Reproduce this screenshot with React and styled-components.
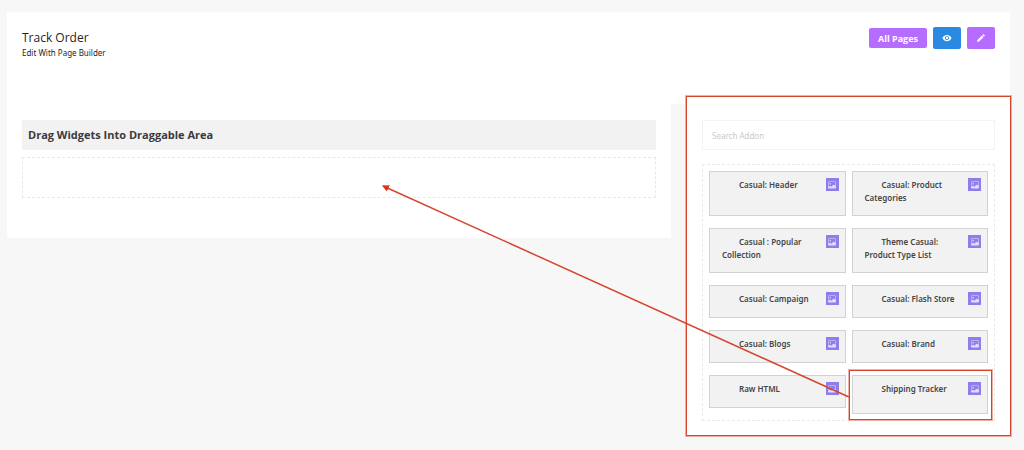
import styled, { createGlobalStyle } from "styled-components";
import { MdEdit, MdVisibility } from "react-icons/md";
import { BsImage } from "react-icons/bs";

const annotationColor = "#d64530";

const headingFont = `"Open Sans", "Noto Sans", sans-serif`;

const GlobalStyle = createGlobalStyle`
  * {
    box-sizing: border-box;
  }
  body {
    margin: 0;
    background: #f7f7f7;
    color: #1f1f23;
    font-family: "Noto Sans", "Open Sans", sans-serif;
  }
`;

const Page = styled.main`
  position: relative;
  padding: 12px 14px 14px 7px;
`;

const Header = styled.header`
  display: flex;
  justify-content: space-between;
  align-items: flex-start;
  min-height: 92px;
  padding: 15px;
  background: #fff;
  h1 {
    margin: 0;
    padding-top: 2px;
    font-family: ${headingFont};
    font-size: 12px;
    line-height: 18px;
    font-weight: 500;
  }
  p {
    margin: 0;
    font-size: 8px;
    line-height: 12px;
    font-weight: 400;
  }
`;

const Actions = styled.div`
  display: flex;
  align-items: center;
  gap: 6px;
`;

const Button = styled.button`
  display: flex;
  align-items: center;
  justify-content: center;
  height: ${({ $icon }) => ($icon ? 22 : 20)}px;
  width: ${({ $icon }) => ($icon ? "28px" : "auto")};
  padding: 0 ${({ $icon }) => ($icon ? 0 : 9)}px;
  border: 0;
  border-radius: 2px;
  background: ${({ $color }) => $color || "#b66dff"};
  color: #fff;
  font-family: ${headingFont};
  font-size: 9px;
  font-weight: 700;
  cursor: pointer;
`;

const Columns = styled.div`
  display: grid;
  grid-template-columns: 664fr 323fr;
  gap: 16px;
  align-items: start;
`;

const Builder = styled.section`
  padding: 16px 15px 40px;
  background: #fff;
  h2 {
    margin: 0 0 7px;
    padding: 0 6px;
    background: #f2f2f2;
    color: #3a3a3c;
    font-family: ${headingFont};
    font-size: 11px;
    line-height: 30px;
    font-weight: 700;
  }
`;

const DropArea = styled.div`
  height: 41px;
  border: 1px dashed #e9e9e9;
`;

const Sidebar = styled.aside`
  position: relative;
  padding: 16px 15px 15px;
  background: #fff;
`;

const Highlight = styled.span`
  position: absolute;
  inset: ${({ $inset }) => $inset};
  border: 1px solid ${annotationColor};
  box-shadow: 0 0 0 1px #eeb0a4;
  pointer-events: none;
`;

const Search = styled.input`
  display: block;
  width: 100%;
  height: 30px;
  margin-bottom: 14px;
  padding: 0 9px;
  border: 1px solid #f3f3f3;
  background: #fff;
  font-family: inherit;
  font-size: 8px;
  &::placeholder {
    color: #c9c9c9;
    opacity: 1;
  }
`;

const AddonList = styled.ul`
  display: grid;
  grid-template-columns: 1fr 1fr;
  align-items: start;
  gap: 12px 6px;
  margin: 0;
  padding: 6px;
  border: 1px dashed #e9e9e9;
  list-style: none;
`;

const Addon = styled.li`
  position: relative;
  display: flex;
  justify-content: space-between;
  align-items: flex-start;
  min-height: ${({ $height }) => $height}px;
  padding: 6px;
  border: 1px solid #d2d2d2;
  background: #f2f2f2;
  cursor: move;
`;

const AddonName = styled.span`
  padding-left: 6px;
  color: #454547;
  font-size: 8px;
  line-height: 13px;
  font-weight: 600;
  text-indent: 17px;
`;

const AddonIcon = styled.span`
  display: flex;
  flex: none;
  align-items: center;
  justify-content: center;
  width: 13px;
  height: 13px;
  background: #8f7eea;
  color: #e2dcff;
`;

const Arrow = styled.svg`
  position: absolute;
  top: 0;
  left: 0;
  width: 100%;
  height: 100%;
  pointer-events: none;
`;

const addons = [
  { name: "Casual: Header", height: 45 },
  { name: "Casual: Product Categories", height: 45 },
  { name: "Casual : Popular Collection", height: 45 },
  { name: "Theme Casual: Product Type List", height: 45 },
  { name: "Casual: Campaign", height: 33 },
  { name: "Casual: Flash Store", height: 33 },
  { name: "Casual: Blogs", height: 33 },
  { name: "Casual: Brand", height: 33 },
  { name: "Raw HTML", height: 33 },
  { name: "Shipping Tracker", height: 39, highlighted: true },
];

export default function App() {
  return (
    <>
      <GlobalStyle />
      <Page>
        <Header>
          <div>
            <h1>Track Order</h1>
            <p>Edit With Page Builder</p>
          </div>
          <Actions>
            <Button type="button">All Pages</Button>
            <Button type="button" $icon $color="#2a8ae2" aria-label="View page">
              <MdVisibility size={10} />
            </Button>
            <Button type="button" $icon aria-label="Edit page">
              <MdEdit size={10} />
            </Button>
          </Actions>
        </Header>
        <Columns>
          <Builder>
            <h2>Drag Widgets Into Draggable Area</h2>
            <DropArea />
          </Builder>
          <Sidebar>
            <Search type="text" placeholder="Search Addon" aria-label="Search Addon" />
            <AddonList>
              {addons.map(({ name, height, highlighted }) => (
                <Addon key={name} $height={height}>
                  <AddonName>{name}</AddonName>
                  <AddonIcon>
                    <BsImage size={8} />
                  </AddonIcon>
                  {highlighted ? <Highlight $inset="-6px -5px -7px -4px" /> : null}
                </Addon>
              ))}
            </AddonList>
            <Highlight $inset="-8px -1px 0 -1px" />
          </Sidebar>
        </Columns>
        <Arrow aria-hidden="true">
          <defs>
            <marker
              id="arrow-head"
              markerUnits="userSpaceOnUse"
              markerWidth="7"
              markerHeight="7"
              refX="6"
              refY="3.5"
              orient="auto"
            >
              <path d="M0 0 L7 3.5 L0 7 Z" fill="#d9341c" />
            </marker>
          </defs>
          <line
            x1="82.9%"
            y1="397"
            x2="37.4%"
            y2="186"
            stroke={annotationColor}
            strokeWidth="1.5"
            markerEnd="url(#arrow-head)"
          />
        </Arrow>
      </Page>
    </>
  );
}
